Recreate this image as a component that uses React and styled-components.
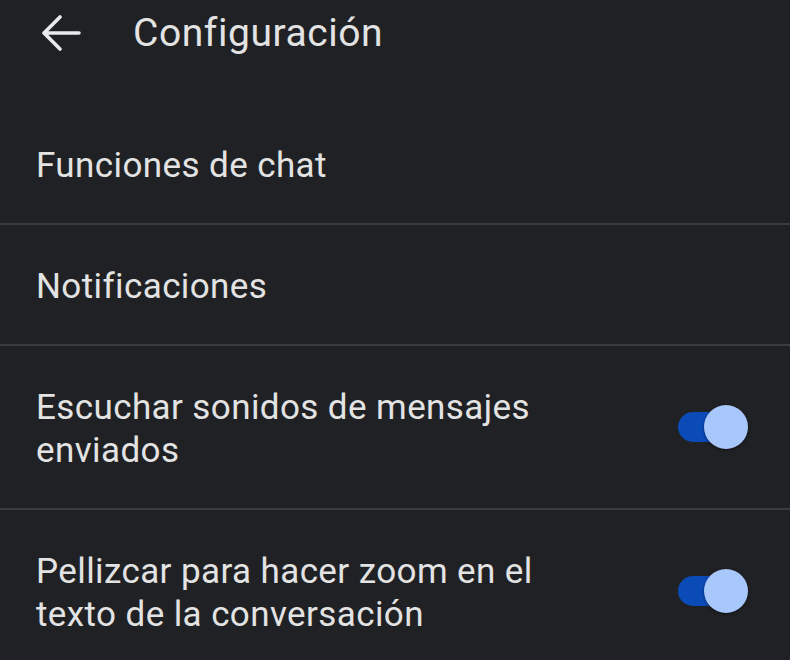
import React from "react";
import styled, { createGlobalStyle } from "styled-components";

const Global = createGlobalStyle`
  html, body { margin: 0; padding: 0; background: #202124; }
  body { font-family: Roboto, "Noto Sans", sans-serif; -webkit-font-smoothing: antialiased; }
  #root { min-height: 100vh; background: #202124; }
`;

const Screen = styled.div`
  width: 790px;
  height: 660px;
  overflow: hidden;
  background: #202124;
  color: #e3e3e3;
`;

const Header = styled.header`
  display: flex;
  align-items: center;
  height: 66px;
  padding-left: 40px;
  margin-bottom: 38px;
`;

const BackButton = styled.button`
  display: flex;
  align-items: center;
  justify-content: center;
  width: 42px;
  height: 42px;
  padding: 0;
  margin-right: 51px;
  background: none;
  border: none;
  color: #e8eaed;
`;

const Title = styled.h1`
  margin: 0;
  font-size: 39px;
  font-weight: 400;
  letter-spacing: 0.55px;
  color: #e3e3e3;
`;

const List = styled.div`
  display: flex;
  flex-direction: column;
`;

const Item = styled.div`
  display: flex;
  align-items: center;
  justify-content: space-between;
  padding: 40px 48px 36px 36px;
  border-bottom: 2px solid #3a3b3e;
`;

const Label = styled.div`
  font-size: 35px;
  line-height: 43px;
  letter-spacing: 0.4px;
  color: #e3e3e3;
  max-width: ${(p) => (p.$narrow ? "540px" : "none")};
`;

const Switch = styled.div`
  position: relative;
  width: 64px;
  height: 30px;
  flex-shrink: 0;
  margin-top: -4px;
  border-radius: 15px;
  background: #0a4bb8;
`;

const Thumb = styled.div`
  position: absolute;
  right: -6px;
  top: -7px;
  width: 44px;
  height: 44px;
  border-radius: 50%;
  background: #a8c7fa;
  box-shadow: 0 1px 3px rgba(0, 0, 0, 0.5);
`;

const Toggle = () => (
  <Switch>
    <Thumb />
  </Switch>
);

export default function App() {
  return (
    <>
      <Global />
      <Screen>
        <Header>
          <BackButton aria-label="Atrás">
            <svg width="40" height="36" viewBox="0 0 40 36" fill="none" stroke="currentColor" strokeWidth="3.6" strokeLinecap="round" strokeLinejoin="round">
              <path d="M38 18H3M19 2L3 18l16 16" />
            </svg>
          </BackButton>
          <Title>Configuración</Title>
        </Header>
        <List>
          <Item>
            <Label>Funciones de chat</Label>
          </Item>
          <Item>
            <Label>Notificaciones</Label>
          </Item>
          <Item>
            <Label $narrow>Escuchar sonidos de mensajes enviados</Label>
            <Toggle />
          </Item>
          <Item>
            <Label $narrow>Pellizcar para hacer zoom en el texto de la conversación</Label>
            <Toggle />
          </Item>
        </List>
      </Screen>
    </>
  );
}
